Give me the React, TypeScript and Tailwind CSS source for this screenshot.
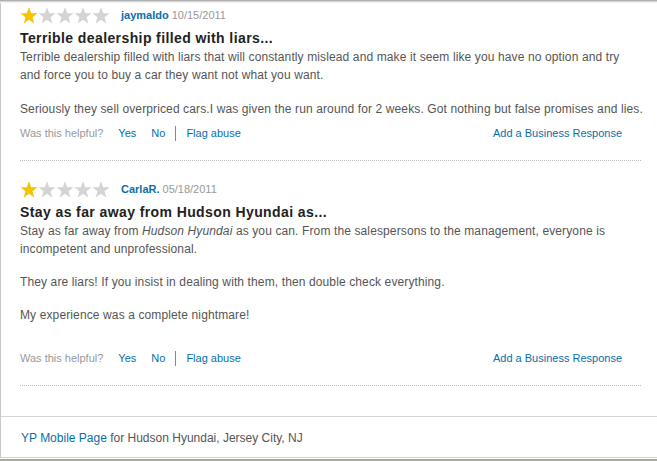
import React from "react";

const font = { fontFamily: '"Liberation Sans", Arial, sans-serif' };

function Star({ on }: { on: boolean }) {
  return (
    <svg width="18" height="17" viewBox="0 0 24 23">
      <polygon
        points="12,0.5 15,8.3 23.5,8.6 16.8,13.9 19.2,22.3 12,17.4 4.8,22.3 7.2,13.9 0.5,8.6 9,8.3"
        fill={on ? "#f5c400" : "#d4d4d4"}
      />
    </svg>
  );
}

function Review({
  user,
  date,
  title,
  children,
}: {
  user: string;
  date: string;
  title: string;
  children: React.ReactNode;
}) {
  return (
    <div className="pl-[19px] pr-[16px]">
      <div className="flex items-center h-[17px]">
        <div className="flex">
          {[0, 1, 2, 3, 4].map((i) => (
            <Star key={i} on={i === 0} />
          ))}
        </div>
        <span className="ml-[11px] text-[11px] font-bold text-[#0a6eab]">{user}</span>
        <span className="ml-[3px] text-[11px] text-[#999]">{date}</span>
      </div>
      <h3 className="mt-[5px] text-[14px] leading-[18px] font-bold tracking-[0.4px] text-[#222]">
        {title}
      </h3>
      <div className="mt-[1px] text-[12px] leading-[18px] tracking-[0.12px] text-[#555] whitespace-nowrap">
        {children}
      </div>
      <div className="flex items-center text-[11px] h-[14px] mt-[8px]">
        <span className="text-[#999]">Was this helpful?</span>
        <span className="ml-[15px] text-[#0a6eab]">Yes</span>
        <span className="ml-[15px] text-[#0a6eab]">No</span>
        <span className="ml-[10px] w-px h-[15px] bg-[#888]" />
        <span className="ml-[10px] text-[#0a6eab]">Flag abuse</span>
        <span className="ml-auto mr-[19px] text-[#0a6eab]">Add a Business Response</span>
      </div>
      <div className="mt-[20px] border-t border-dotted border-[#bbb]" />
    </div>
  );
}

export default function App() {
  return (
    <div className="w-[657px] h-[461px] bg-white overflow-hidden relative" style={font}>
      <div className="h-[3px] bg-gradient-to-b from-[#9a9a9a] via-[#d8d8d8] to-white" />
      <div className="border-l border-[#c8c8c8] h-[455px]">
        <div className="pt-[4px]">
          <Review user="jaymaldo" date="10/15/2011" title="Terrible dealership filled with liars...">
            <p>
              Terrible dealership filled with liars that will constantly mislead and make it seem like you
              have no option and try
              <br />
              and force you to buy a car they want not what you want.
            </p>
            <p className="mt-[16px]">
              Seriously they sell overpriced cars.I was given the run around for 2 weeks. Got nothing but
              false promises and lies.
            </p>
          </Review>
          <div className="h-[20px]" />
          <Review user="CarlaR." date="05/18/2011" title="Stay as far away from Hudson Hyundai as...">
            <p>
              Stay as far away from <i>Hudson Hyundai</i> as you can. From the salespersons to the
              management, everyone is
              <br />
              incompetent and unprofessional.
            </p>
            <p className="mt-[15px]">
              They are liars! If you insist in dealing with them, then double check everything.
            </p>
            <p className="mt-[15px]">My experience was a complete nightmare!</p>
            <div className="h-[19px]" />
          </Review>
        </div>
        <div className="mt-[30px] border-t border-[#d6d6d6]" />
        <div className="pl-[20px] pt-[12px] text-[12px] text-[#555]">
          <span className="text-[#0a6eab]">YP Mobile Page</span> for Hudson Hyundai, Jersey City, NJ
        </div>
      </div>
      <div className="absolute left-0 right-0 top-[457px] h-px bg-[#cfcfcf]" />
      <div className="absolute left-0 right-0 top-[459px] h-[2px] bg-[#a8a89a]" />
    </div>
  );
}
